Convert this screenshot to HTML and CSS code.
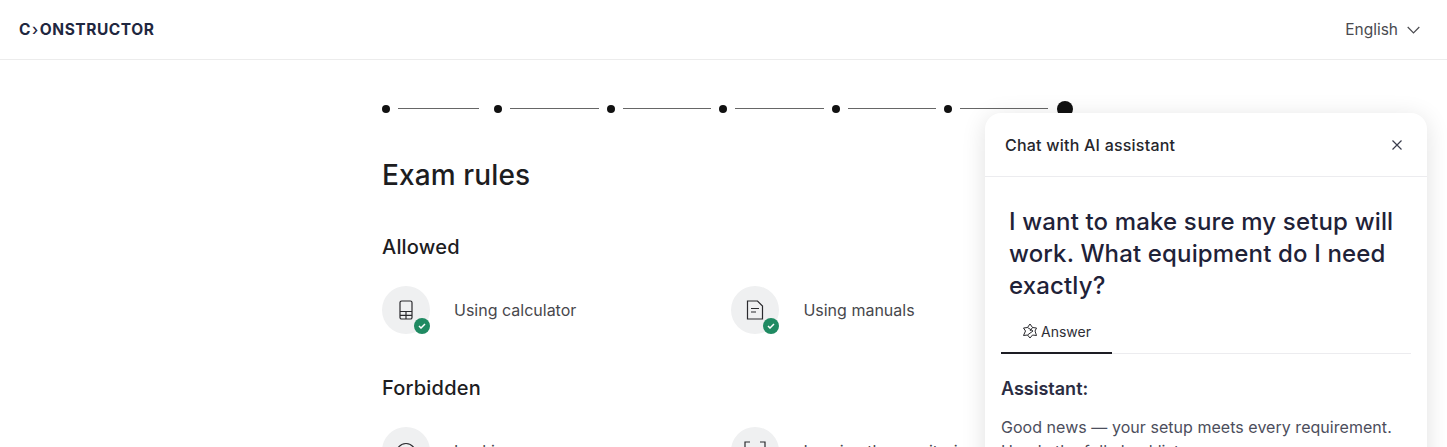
FILE: index.html
```html
<!DOCTYPE html>
<html lang="en">
<head>
  <meta charset="utf-8">
  <title>Exam rules</title>
  <link rel="stylesheet" href="styles.css">
</head>
<body>
  <header class="topbar">
    <div class="logo">C<span class="logo-arrow">›</span>ONSTRUCTOR</div>
    <div class="lang">English
      <svg width="13" height="8" viewBox="0 0 13 8" fill="none"><path d="M.7 1l5.800 5.800L12.300 1" stroke="#4a4a4f" stroke-width="1.2"/></svg>
    </div>
  </header>

  <main class="content">
    <div class="stepper">
      <div class="step first"><i class="dot"></i><i class="line"></i></div>
      <div class="step"><i class="dot"></i><i class="line"></i></div>
      <div class="step"><i class="dot"></i><i class="line"></i></div>
      <div class="step"><i class="dot"></i><i class="line"></i></div>
      <div class="step"><i class="dot"></i><i class="line"></i></div>
      <div class="step"><i class="dot"></i><i class="line"></i></div>
      <i class="dot big"></i>
    </div>

    <h1>Exam rules</h1>

    <h2>Allowed</h2>
    <div class="rules">
      <div class="rule">
        <div class="rule-icon">
          <svg width="16" height="20" viewBox="0 0 16 20" fill="none" stroke="#2a2a2e" stroke-width="1.2"><rect x="2" y="1" width="12" height="18" rx="1.6"/><path d="M2 11.5h12M2 15.300h12M8 11.500V19"/></svg>
          <span class="ok"><svg width="8" height="6" viewBox="0 0 8 6" fill="none"><path d="M1 3l2 2 4-4" stroke="#fff" stroke-width="1.5"/></svg></span>
        </div>
        <span>Using calculator</span>
      </div>
      <div class="rule">
        <div class="rule-icon">
          <svg width="18" height="20" viewBox="0 0 18 20" fill="none" stroke="#2a2a2e" stroke-width="1.2"><path d="M1.500 1h10L16.500 6v13h-15z"/><path d="M5 8.500h8M5 12h5"/></svg>
          <span class="ok"><svg width="8" height="6" viewBox="0 0 8 6" fill="none"><path d="M1 3l2 2 4-4" stroke="#fff" stroke-width="1.5"/></svg></span>
        </div>
        <span>Using manuals</span>
      </div>
    </div>

    <h2 class="forbidden">Forbidden</h2>
    <div class="rules">
      <div class="rule">
        <div class="rule-icon">
          <svg width="24" height="20" viewBox="0 0 24 20" fill="none" stroke="#2a2a2e" stroke-width="1.2"><path d="M2 10c2.5-5 6-7.500 10-7.500S19.500 5 22 10c-2.500 5-6 7.500-10 7.500S4.500 15 2 10z"/><circle cx="12" cy="10" r="3.500"/></svg>
        </div>
        <span>Looking away</span>
      </div>
      <div class="rule">
        <div class="rule-icon">
          <svg width="22" height="20" viewBox="0 0 22 20" fill="none" stroke="#2a2a2e" stroke-width="1.2"><path d="M6 1H1v5M16 1h5v5M6 19H1v-5M16 19h5v-5"/></svg>
        </div>
        <span>Leaving the monitoring area</span>
      </div>
    </div>
  </main>

  <aside class="chat">
    <div class="chat-head">
      <span>Chat with AI assistant</span>
      <svg width="10" height="10" viewBox="0 0 10 10" fill="none"><path d="M.5.500l9 9M9.500.500l-9 9" stroke="#3a3d4d" stroke-width="1.2"/></svg>
    </div>
    <div class="chat-body">
      <h3>I want to make sure my setup will work. What equipment do I need exactly?</h3>
      <div class="tabs">
        <div class="tab">
          <svg width="16" height="16" viewBox="0 0 16 16" fill="none" stroke="#2a2a2e" stroke-width="1"><path d="M8 1L5.500 4.500 1.500 5 3.500 8 1.500 12.500 5.500 12 8 15l2.500-3 4 .5L13 8l1.500-3-4-.500z"/><path d="M5.500 4.500L11 8l-5.500 4M10.500 4.500L8 8"/></svg>
          Answer
        </div>
      </div>
      <h4>Assistant:</h4>
      <p>Good news — your setup meets every requirement. Here's the full checklist:</p>
    </div>
  </aside>
</body>
</html>
```

FILE: styles.css
```css
* { margin: 0; padding: 0; box-sizing: border-box; }
html, body { height: 100%; overflow: hidden; }
body {
  font-family: Inter, "Liberation Sans", sans-serif;
  background: #fff; color: #1d1d1f;
  position: relative;
}

.topbar {
  height: 60px; padding: 0 27px 0 19px;
  display: flex; align-items: center; justify-content: space-between;
  border-bottom: 1px solid #ececec;
}
.logo { font-size: 15.5px; font-weight: 700; color: #1f2740; letter-spacing: 0.55px; }
.logo-arrow { font-weight: 500; margin: 0 1px; }
.lang { display: flex; align-items: center; gap: 9px; font-size: 15.5px; color: #4a4a4f; }

.content { width: 700px; margin-left: 382px; padding-top: 40px; }
.stepper { display: flex; align-items: center; height: 17px; }
.step { width: 112.4px; display: flex; align-items: center; }
.dot { width: 8px; height: 8px; border-radius: 50%; background: #111; flex: none; }
.dot.big { width: 16px; height: 16px; margin-left: 0.6px; }
.line { flex: 1; height: 1px; background: #666; margin: 0 8px; }
.step.first .line { margin-right: 15px; }

h1 { font-size: 28px; line-height: 36px; font-weight: 500; letter-spacing: 0.13px; margin-top: 40px; }
h2 { font-size: 20px; line-height: 28px; font-weight: 500; letter-spacing: 0.2px; margin-top: 40px; }
h2.forbidden { margin-top: 40px; }

.rules { display: grid; grid-template-columns: 349.4px 1fr; margin-top: 25px; }
.rule { display: flex; align-items: center; gap: 24px; font-size: 16px; color: #47474c; white-space: nowrap; }
.rule-icon {
  width: 48px; height: 48px; border-radius: 50%; background: #eff0f1; flex: none;
  position: relative; display: flex; align-items: center; justify-content: center;
}
.ok {
  position: absolute; right: 0; bottom: 0;
  width: 16px; height: 16px; border-radius: 50%; background: #1f8a62;
  display: flex; align-items: center; justify-content: center;
}

.chat {
  position: absolute; left: 985px; top: 113px; width: 442px; height: 400px;
  background: #fff; border-radius: 16px;
  box-shadow: 0 4px 24px rgba(0,0,0,0.12);
}
.chat-head {
  height: 64px; padding: 0 25px 0 20px;
  display: flex; align-items: center; justify-content: space-between;
  border-bottom: 1px solid #ececef;
  font-size: 16px; font-weight: 500; letter-spacing: 0.22px; color: #26262c;
}
.chat-body { padding: 0 16px; }
h3 { font-size: 24px; line-height: 32px; font-weight: 500; letter-spacing: 0.15px; color: #1f2238; margin: 29px 8px 0; }
.tabs { border-bottom: 1px solid #ececef; margin-top: 14px; }
.tab {
  width: 111px; height: 38px; margin-bottom: -1px; padding: 0 0 6px 21px;
  display: flex; align-items: center; gap: 3px;
  border-bottom: 2px solid #1d1d24;
  font-size: 14px; color: #2e2e36;
}
h4 { font-size: 18px; line-height: 24px; font-weight: 600; color: #2b2d42; margin-top: 23px; }
p { font-size: 16px; line-height: 24px; letter-spacing: 0.04px; color: #4c4e5c; margin-top: 14px; }
```
